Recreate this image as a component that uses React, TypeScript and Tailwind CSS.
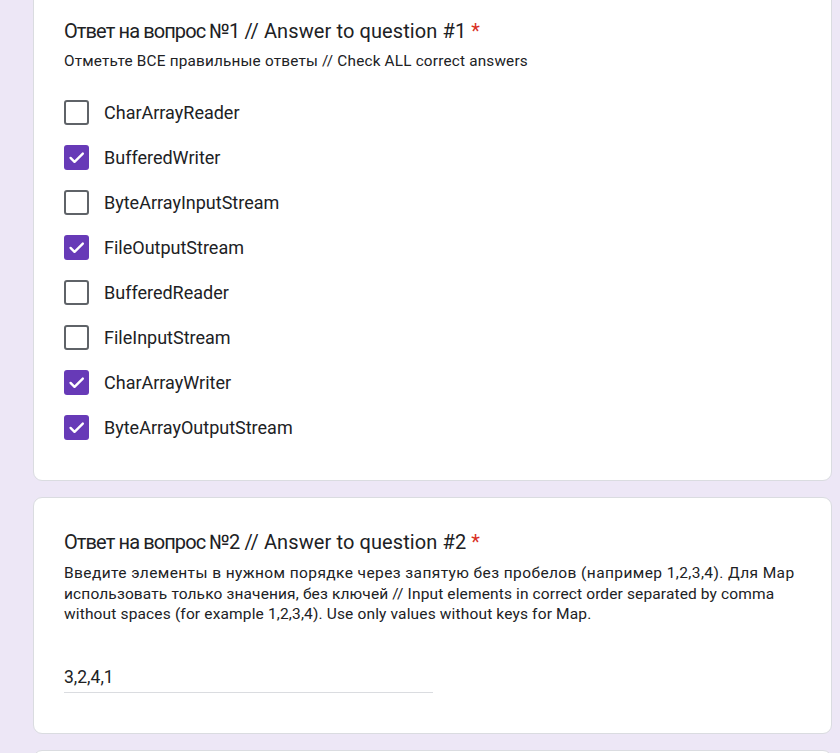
import React from "react";

const options: { label: string; checked: boolean }[] = [
  { label: "CharArrayReader", checked: false },
  { label: "BufferedWriter", checked: true },
  { label: "ByteArrayInputStream", checked: false },
  { label: "FileOutputStream", checked: true },
  { label: "BufferedReader", checked: false },
  { label: "FileInputStream", checked: false },
  { label: "CharArrayWriter", checked: true },
  { label: "ByteArrayOutputStream", checked: true },
];

function Box({ checked }: { checked: boolean }) {
  if (checked) {
    return (
      <div className="w-[25px] h-[25px] rounded-[3px] bg-[#673ab7] flex items-center justify-center shrink-0">
        <svg width="19" height="19" viewBox="0 0 24 24">
          <path d="M4.5 12.5l5 5L20 7" fill="none" stroke="#ffffff" strokeWidth="3" strokeLinecap="round" strokeLinejoin="round" />
        </svg>
      </div>
    );
  }
  return <div className="w-[25px] h-[25px] rounded-[3px] border-[2.5px] border-[#5f6368] shrink-0" />;
}

export default function App() {
  return (
    <div
      className="w-[840px] h-[753px] overflow-hidden bg-[#ede7f6] text-[#202124]"
      style={{ fontFamily: "Roboto, 'Noto Sans', Arial, sans-serif" }}
    >
      <div className="ml-[33px] w-[799px] flex flex-col gap-[16px] -mt-[14px]">
        {/* Card 1 */}
        <div className="bg-white rounded-[9px] border border-[#dadce0] pt-[32px] pb-[30px] px-[30px]">
          <div className="text-[20px] leading-[24px] tracking-[0.1px]">
            <span className="tracking-[-0.9px]">Ответ на вопрос №1</span> // Answer to question #1{" "}
            <span className="text-[#d93025]">*</span>
          </div>
          <div className="mt-[8px] text-[15.3px] leading-[20px] tracking-[0.2px]">
            Отметьте ВСЕ правильные ответы // Check ALL correct answers
          </div>
          <div className="mt-[19px] flex flex-col">
            {options.map((o) => (
              <div key={o.label} className="h-[45px] flex items-center gap-[15px]">
                <Box checked={o.checked} />
                <span className="text-[18px] leading-[24px]">{o.label}</span>
              </div>
            ))}
          </div>
        </div>

        {/* Card 2 */}
        <div className="bg-white rounded-[9px] border border-[#dadce0] pt-[32px] pb-[40px] px-[30px]">
          <div className="text-[20px] leading-[24px] tracking-[0.1px]">
            <span className="tracking-[-0.9px]">Ответ на вопрос №2</span> // Answer to question #2{" "}
            <span className="text-[#d93025]">*</span>
          </div>
          <div className="mt-[9px] text-[15.5px] leading-[20.5px] whitespace-nowrap">
            <span className="block tracking-[0.4px]">
              Введите элементы в нужном порядке через запятую без пробелов (например 1,2,3,4). Для Map
            </span>
            <span className="block tracking-[0.13px]">
              использовать только значения, без ключей // Input elements in correct order separated by comma
            </span>
            <span className="block tracking-[0.15px]">
              without spaces (for example 1,2,3,4). Use only values without keys for Map.
            </span>
          </div>
          <div className="mt-[40px] w-[369px] border-b border-[#dadce0] pb-[3px]">
            <div className="text-[17.5px] leading-[24px]">3,2,4,1</div>
          </div>
        </div>

        {/* Card 3 (partial) */}
        <div className="bg-white rounded-[9px] border border-[#dadce0] h-[60px]" />
      </div>
    </div>
  );
}
